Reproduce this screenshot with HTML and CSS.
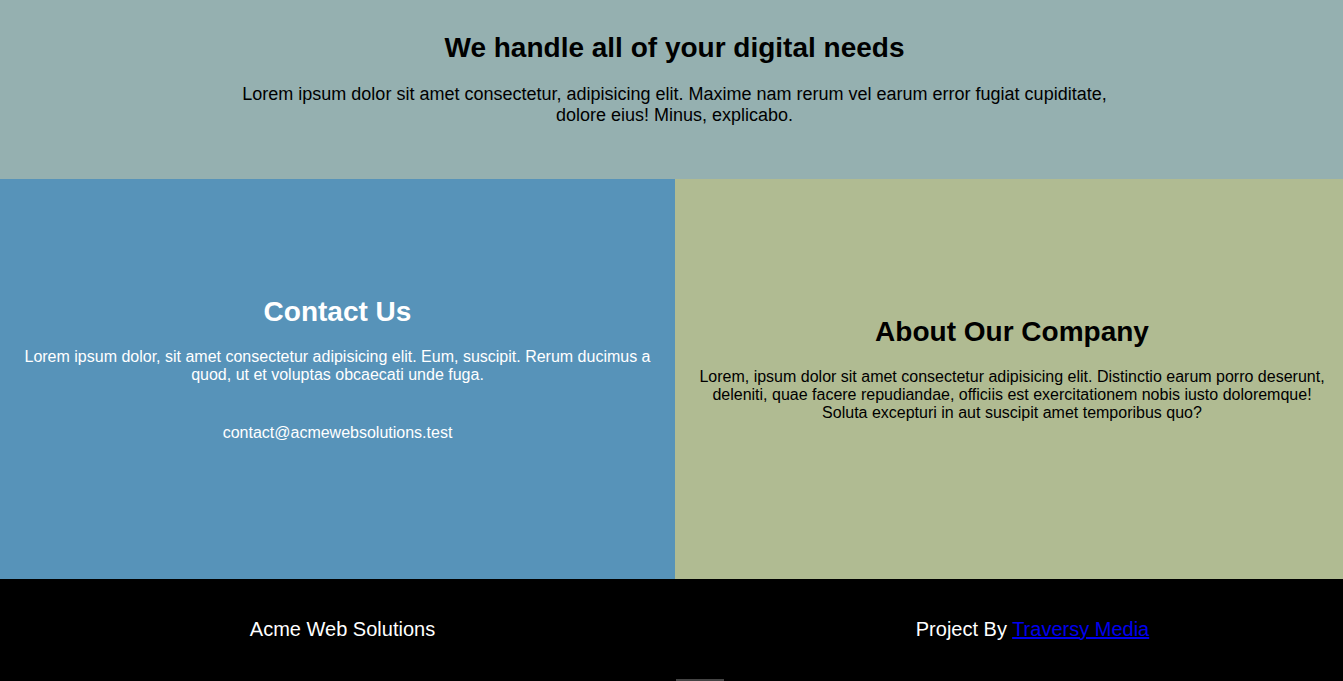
FILE: index.html
```html
<!DOCTYPE html>
<html lang="en">
<head>
<meta charset="utf-8">
<title>Acme Web Solutions</title>
<link rel="stylesheet" href="styles.css">
</head>
<body>
  <section class="intro">
    <h1 class="intro-title">We handle all of your digital needs</h1>
    <p class="intro-text">Lorem ipsum dolor sit amet consectetur, adipisicing elit. Maxime nam rerum vel earum error fugiat cupiditate, dolore eius! Minus, explicabo.</p>
  </section>
  <section class="panels">
    <div class="panel panel-contact">
      <h2 class="panel-title">Contact Us</h2>
      <p class="panel-text">Lorem ipsum dolor, sit amet consectetur adipisicing elit. Eum, suscipit. Rerum ducimus a quod, ut et voluptas obcaecati unde fuga.</p>
      <p class="panel-email">contact@acmewebsolutions.test</p>
    </div>
    <div class="panel panel-about">
      <h2 class="panel-title">About Our Company</h2>
      <p class="panel-text">Lorem, ipsum dolor sit amet consectetur adipisicing elit. Distinctio earum porro deserunt, deleniti, quae facere repudiandae, officiis est exercitationem nobis iusto doloremque! Soluta excepturi in aut suscipit amet temporibus quo?</p>
    </div>
  </section>
  <footer class="footer">
    <div class="footer-row">
      <p class="footer-brand">Acme Web Solutions</p>
      <p class="footer-credit">Project By <a href="#" class="footer-link">Traversy Media</a></p>
    </div>
    <div class="footer-bar"></div>
  </footer>
</body>
</html>
```

FILE: styles.css
```css
* { box-sizing: border-box; }
html, body { margin: 0; padding: 0; }
body {
  font-family: "Liberation Sans", Arial, sans-serif;
  color: #000;
}

.intro {
  background: #95b0b0;
  height: 179px;
  padding: 32px 0 0 6px;
  text-align: center;
}
.intro-title {
  margin: 0 0 20px;
  font-size: 28px;
  font-weight: bold;
}
.intro-text {
  margin: 0 auto;
  max-width: 880px;
  font-size: 18px;
}

.panels {
  display: grid;
  grid-template-columns: 675px 1fr;
  height: 400px;
}
.panel {
  display: flex;
  flex-direction: column;
  justify-content: center;
  padding: 0 20px;
  text-align: center;
  font-size: 16px;
}
.panel-contact {
  background: #5793b9;
  color: #fff;
}
.panel-about {
  background: #b0bb92;
  color: #000;
  padding-left: 22px;
  padding-right: 16px;
}
.panel-title {
  margin: 0 0 20px;
  font-size: 28px;
  font-weight: bold;
}
.panel-text {
  margin: 0 0 20px;
}
.panel-email {
  margin: 20px 0 20px;
}

.footer {
  background: #000;
  color: #fff;
  padding-top: 39px;
  display: flex;
  flex-direction: column;
  align-items: center;
}
.footer-row {
  display: grid;
  grid-template-columns: 685px 1fr;
  width: 100%;
  font-size: 20px;
}
.footer-brand,
.footer-credit {
  margin: 0;
  text-align: center;
}
.footer-credit {
  padding-left: 37px;
}
.footer-link {
  color: #0000ee;
  text-decoration: underline;
}
.footer-bar {
  margin-top: 38px;
  margin-left: 57px;
  width: 48px;
  height: 2px;
  background: #444;
}
```
